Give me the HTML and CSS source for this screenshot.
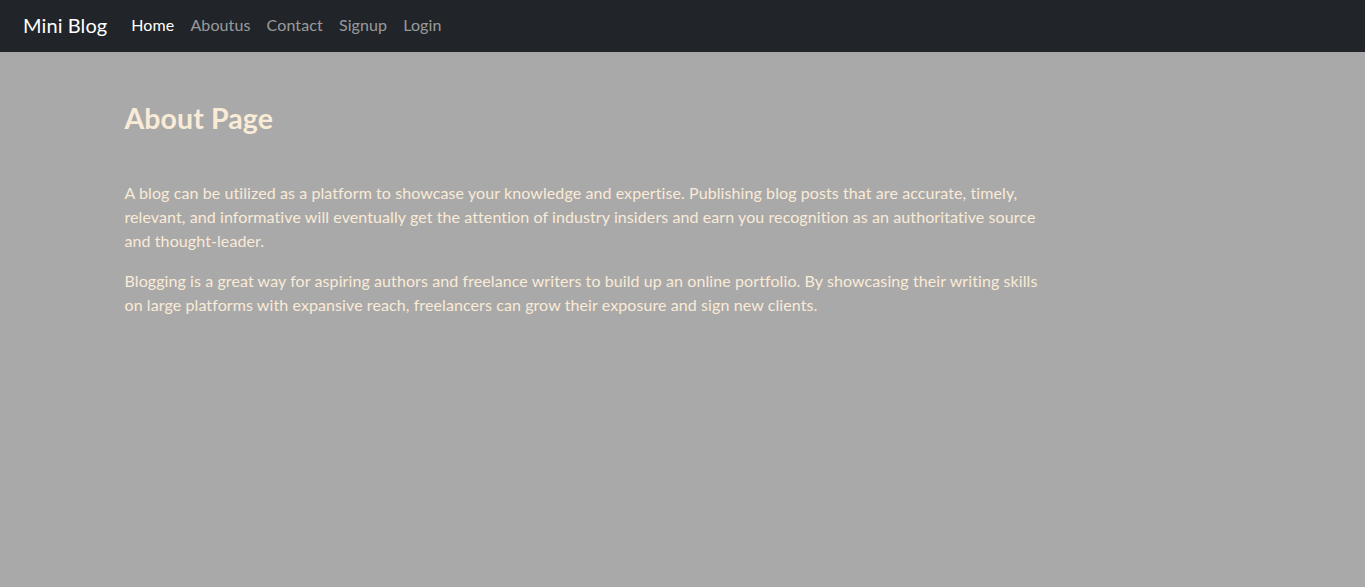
FILE: index.html
```html
<!DOCTYPE html>
<html lang="en">
<head>
<meta charset="utf-8">
<title>Mini Blog - About</title>
<link rel="stylesheet" href="styles.css">
</head>
<body>
<nav class="navbar">
  <a class="brand" href="#">Mini Blog</a>
  <ul class="nav">
    <li><a class="nav-link active" href="#">Home</a></li>
    <li><a class="nav-link" href="#">Aboutus</a></li>
    <li><a class="nav-link" href="#">Contact</a></li>
    <li><a class="nav-link" href="#">Signup</a></li>
    <li><a class="nav-link" href="#">Login</a></li>
  </ul>
</nav>
<main class="container">
  <div class="col">
    <h2 class="title">About Page</h2>
    <p>A blog can be utilized as a platform to showcase your knowledge and expertise. Publishing blog posts that are accurate, timely, relevant, and informative will eventually get the attention of industry insiders and earn you recognition as an authoritative source and thought-leader.</p>
    <p>Blogging is a great way for aspiring authors and freelance writers to build up an online portfolio. By showcasing their writing skills on large platforms with expansive reach, freelancers can grow their exposure and sign new clients.</p>
  </div>
</main>
</body>
</html>
```
FILE: styles.css
```css
* { box-sizing: border-box; }
html, body {
  margin: 0;
  height: 100%;
}
body {
  background: #a9a9a9;
  font-family: "Lato", "Open Sans", sans-serif;
  font-size: 16px;
  line-height: 24px;
  letter-spacing: 0.09px;
  color: #faebd7;
}
.navbar {
  height: 52px;
  background: #212529;
  display: flex;
  align-items: center;
  padding: 0 12px 2px 23px;
}
.brand {
  color: #fff;
  text-decoration: none;
  font-size: 20px;
  line-height: 30px;
  margin-right: 16px;
}
.nav {
  display: flex;
  list-style: none;
  margin: 0;
  padding: 0;
}
.nav-link {
  display: block;
  padding: 0 8px;
  color: rgba(255, 255, 255, 0.55);
  text-decoration: none;
  font-size: 16px;
  line-height: 24px;
  letter-spacing: 0.12px;
}
.nav-link.active { color: #fff; }
.container {
  width: 1140px;
  margin: 0 auto;
  padding: 0 12px;
}
.col {
  width: 926px;
}
.title {
  margin: 47px 0 44px;
  font-size: 28.5px;
  line-height: 38px;
  font-weight: 700;
}
p {
  margin: 0 0 16px;
}
```
